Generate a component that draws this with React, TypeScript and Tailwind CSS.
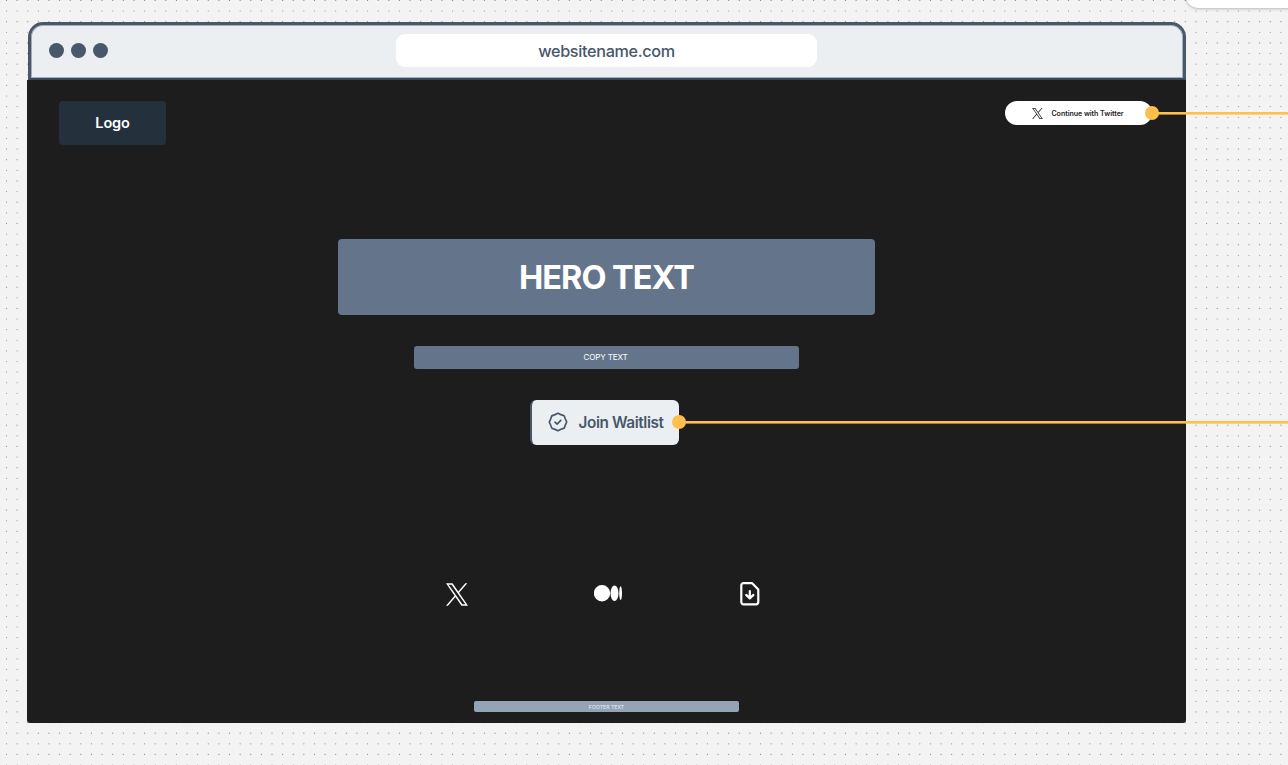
import type { ReactNode } from "react";

function XLogo({ className }: { className: string }) {
  return (
    <svg viewBox="0 0 1200 1227" className={className} fill="currentColor" aria-hidden="true">
      <path d="M714.163 519.284L1160.89 0H1055.03L667.137 450.887L357.328 0H0L468.492 681.821L0 1226.37H105.866L515.491 750.218L842.672 1226.37H1200L714.137 519.284H714.163ZM569.165 687.828L521.697 619.934L144.011 79.694H306.615L611.412 515.685L658.88 583.579L1055.08 1150.3H892.476L569.165 687.854V687.828Z" />
    </svg>
  );
}

function MediumLogo() {
  return (
    <svg viewBox="0 0 28 17" className="h-[17px] w-[28px]" fill="currentColor" aria-hidden="true">
      <circle cx="8" cy="8.2" r="8.2" />
      <ellipse cx="20.5" cy="8.2" rx="4" ry="7.8" />
      <ellipse cx="26.6" cy="8.2" rx="1.4" ry="6.9" />
    </svg>
  );
}

function FileDownIcon() {
  return (
    <svg
      viewBox="0 0 20 24"
      className="mt-px h-6 w-5"
      fill="none"
      stroke="currentColor"
      strokeWidth="2.2"
      strokeLinecap="round"
      strokeLinejoin="round"
      aria-hidden="true"
    >
      <path d="M12.2 1.2H3.500a2.200 2.200 0 0 0-2.200 2.200v16.700a2.200 2.200 0 0 0 2.200 2.200h12.600a2.200 2.200 0 0 0 2.200-2.200V7.500z" />
      <path d="M9.800 9v7.200M6.200 12.900l3.600 3.500 3.600-3.500" />
    </svg>
  );
}

function VerifiedIcon() {
  return (
    <svg
      viewBox="0 0 20 20"
      className="mb-px h-5 w-5 shrink-0"
      fill="none"
      stroke="currentColor"
      strokeWidth="1.7"
      strokeLinecap="round"
      strokeLinejoin="round"
      aria-hidden="true"
    >
      <path d="M10 1.300 12.900 2.600 16.100 3.800 17.400 7 18.700 10 17.400 12.900 16.200 16.100 13 17.300 10 18.700 7.100 17.400 3.900 16.200 2.600 13 1.300 10 2.600 7.100 3.800 3.900 7 2.600z" />
      <path d="m7 10.200 2.100 1.900 3.700-3.800" />
    </svg>
  );
}

function Connector({ className }: { className: string }) {
  return (
    <div className={`absolute right-0 flex h-[14px] items-start ${className}`}>
      <span className="h-[14px] w-[14px] shrink-0 rounded-full bg-[#ffbf4d]" />
      <span className="-ml-1 mt-[6px] h-[3px] flex-1 border-b border-[#ffbf4d]/60 bg-[#ffbf4d] bg-clip-padding" />
    </div>
  );
}

function Block({ className, children }: { className: string; children: ReactNode }) {
  return <div className={`flex items-center justify-center whitespace-nowrap ${className}`}>{children}</div>;
}

function DotGrid() {
  const pitch = 10.62;
  const dots: ReactNode[] = [];
  for (let row = 0; row < 73; row++) {
    for (let col = 0; col < 122; col++) {
      dots.push(
        <circle key={`${row}-${col}`} cx={6.5 + col * pitch} cy={0.4 + row * pitch} r={0.58} />,
      );
    }
  }
  return (
    <svg className="absolute inset-0" width="1288" height="765" fill="#8c8c8c" aria-hidden="true">
      {dots}
    </svg>
  );
}

export default function App() {
  return (
    <div className="relative h-[765px] w-[1288px] overflow-hidden bg-[#f3f3f3] pl-[27px] pt-[22px] font-['Inter',sans-serif]">
      <DotGrid />
      <div className="absolute -top-10 left-[1185px] h-12 w-[140px] rounded-[14px] bg-white shadow-[0_1px_3px_rgba(0,0,0,0.25)]" />

      <main className="relative w-[1159px]">
        <header className="ml-px flex h-[58px] w-[1158px] rounded-t-[15px] border-x-[3px] border-b-2 border-t-[3px] border-[#48576a] border-b-[#384858] bg-[#ebeff2] pl-[18px] shadow-[inset_0_0_0_1px_#a3adb8]">
          <div className="flex w-[347px] items-center gap-[7px] pb-[2px]">
            <span className="h-[15px] w-[15px] rounded-full bg-[#48576a]" />
            <span className="h-[15px] w-[15px] rounded-full bg-[#48576a]" />
            <span className="h-[15px] w-[15px] rounded-full bg-[#48576a]" />
          </div>
          <Block className="mt-[9px] h-[33px] w-[421px] rounded-[9px] bg-white pt-px text-[16.200px] font-medium tracking-[-0.32px] text-[#48576a]">
            websitename.com
          </Block>
        </header>

        <section className="flex h-[643px] flex-col items-center rounded-b-[3px] bg-[#1d1d1d] pt-[21px] text-white">
          <div className="flex h-[138px] w-full items-start justify-between pl-[32px] pr-[34px]">
            <Block className="h-[44px] w-[107px] rounded-[4px] bg-[#25303d] text-[14.500px] font-semibold tracking-[-0.15px]">
              Logo
            </Block>
            <Block className="h-[24px] w-[147px] gap-[8px] rounded-full bg-white pr-px text-[7.100px] font-semibold tracking-[-0.05px] text-[#1d1d1d]">
              <XLogo className="h-[11px] w-[11px]" />
              <span className="pt-[2px]">Continue with Twitter</span>
            </Block>
          </div>

          <Block className="h-[76px] w-[537px] rounded-[4px] bg-[#64748b] pt-[2px] text-[32.500px] font-bold tracking-[-1px]">
            HERO TEXT
          </Block>
          <Block className="mt-[31px] h-[23px] w-[385px] rounded-[3px] bg-[#64748b] pr-[2px] text-[8.100px] tracking-[-0.18px]">
            COPY TEXT
          </Block>
          <Block className="mr-[4px] mt-[31px] h-[45px] w-[149px] gap-[11px] rounded-[6px] border-l-2 border-[#48576a] bg-[#ebeff2] text-[15.300px] font-semibold tracking-[-0.4px] text-[#48576a]">
            <VerifiedIcon />
            <span className="pt-px">Join Waitlist</span>
          </Block>

          <div className="mr-[7px] mt-[136px] flex h-6 w-[314px] justify-between">
            <XLogo className="mt-[2px] h-[23px] w-[22px]" />
            <div className="ml-[7px] mt-[4px]">
              <MediumLogo />
            </div>
            <FileDownIcon />
          </div>

          <Block className="mt-[96px] h-[11px] w-[265px] rounded-[2px] bg-[#94a3b8] pt-[2px] text-[5.200px] text-[#eaeef2]">
            FOOTER TEXT
          </Block>
        </section>
      </main>

      <Connector className="left-[1145px] top-[106px]" />
      <Connector className="left-[672px] top-[415px]" />
    </div>
  );
}
